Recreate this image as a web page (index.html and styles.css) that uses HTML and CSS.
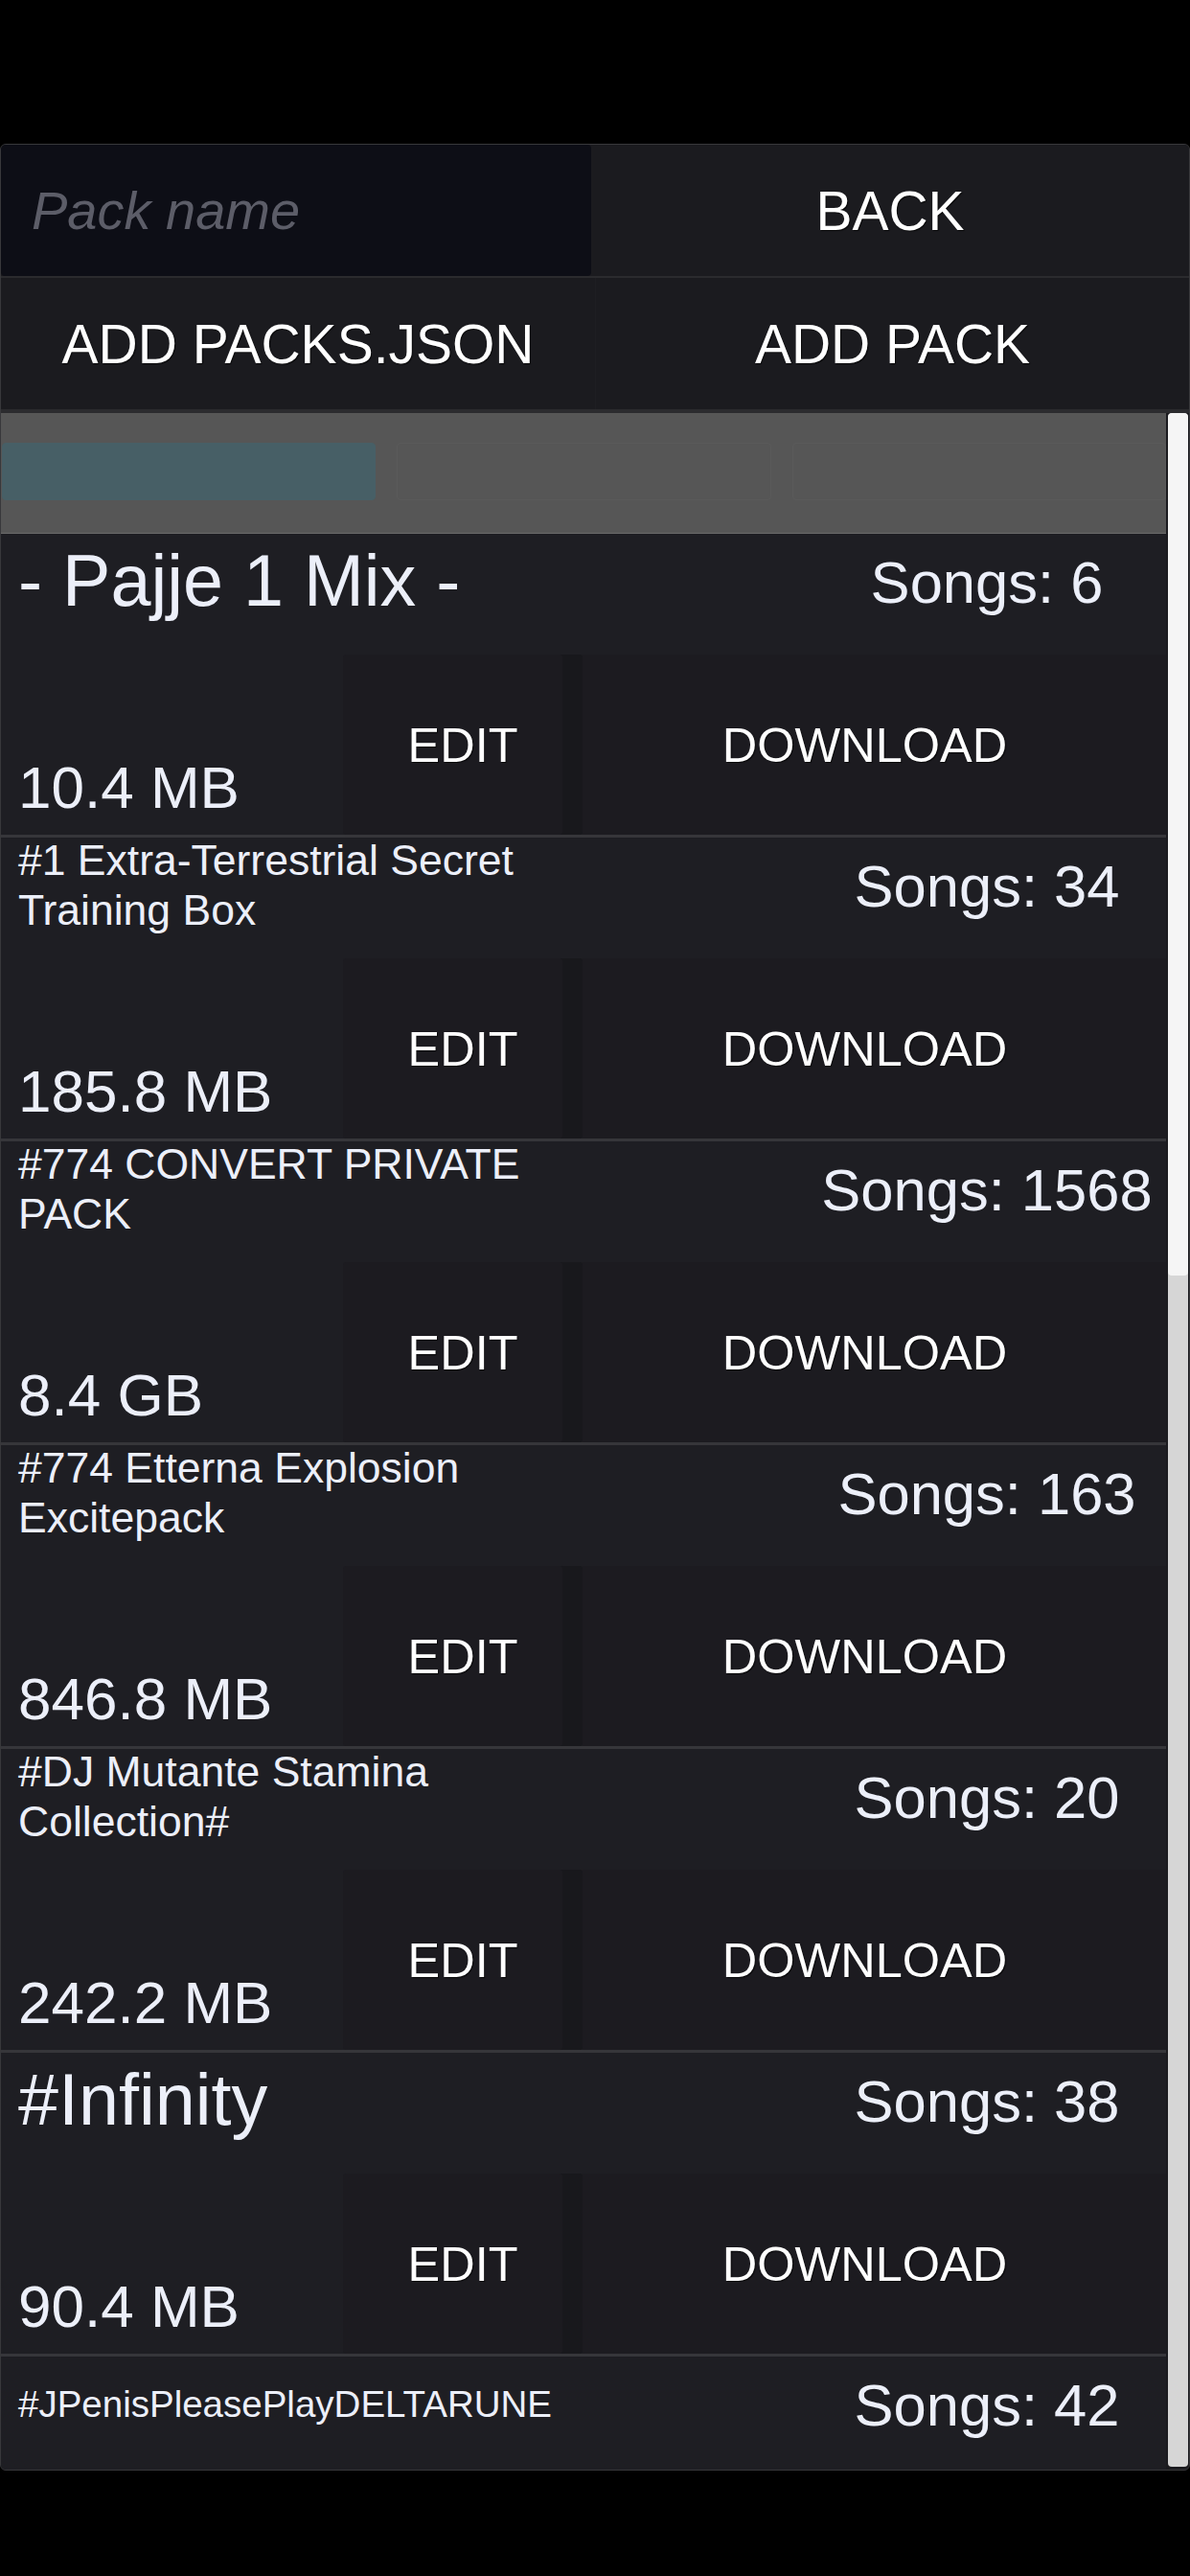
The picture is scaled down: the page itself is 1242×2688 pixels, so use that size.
FILE: index.html
```html
<!DOCTYPE html>
<html lang="en">
<head>
    <meta charset="UTF-8">
    <meta name="viewport" content="width=device-width, initial-scale=1.0">
    <title>Packs</title>
    <link rel="stylesheet" href="styles.css">
</head>
<body>

    <div class="panel">
        <div class="top-row">
            <input class="pack-input" type="text" placeholder="Pack name">
            <button class="btn">BACK</button>
        </div>
        <div class="top-row second">
            <button class="btn">ADD PACKS.JSON</button>
            <button class="btn">ADD PACK</button>
        </div>

        <div class="list-wrap">
            <div class="list">
                <!-- Tabs -->
                <div class="tabs">
                    <div class="tab active"></div>
                    <div class="tab"></div>
                    <div class="tab"></div>
                </div>

                <div class="pack">
                    <div class="pack-head">
                        <div class="pack-name big">- Pajje 1 Mix -</div>
                        <div class="songs">Songs: 6</div>
                    </div>
                    <div class="pack-actions">
                        <div class="size">10.4 MB</div>
                        <button class="act edit">EDIT</button>
                        <button class="act download">DOWNLOAD</button>
                    </div>
                </div>

                <div class="pack">
                    <div class="pack-head">
                        <div class="pack-name">#1 Extra-Terrestrial Secret Training Box</div>
                        <div class="songs">Songs: 34</div>
                    </div>
                    <div class="pack-actions">
                        <div class="size">185.8 MB</div>
                        <button class="act edit">EDIT</button>
                        <button class="act download">DOWNLOAD</button>
                    </div>
                </div>

                <div class="pack">
                    <div class="pack-head">
                        <div class="pack-name">#774 CONVERT PRIVATE PACK</div>
                        <div class="songs">Songs: 1568</div>
                    </div>
                    <div class="pack-actions">
                        <div class="size">8.4 GB</div>
                        <button class="act edit">EDIT</button>
                        <button class="act download">DOWNLOAD</button>
                    </div>
                </div>

                <div class="pack">
                    <div class="pack-head">
                        <div class="pack-name">#774 Etterna Explosion Excitepack</div>
                        <div class="songs">Songs: 163</div>
                    </div>
                    <div class="pack-actions">
                        <div class="size">846.8 MB</div>
                        <button class="act edit">EDIT</button>
                        <button class="act download">DOWNLOAD</button>
                    </div>
                </div>

                <div class="pack">
                    <div class="pack-head">
                        <div class="pack-name">#DJ Mutante Stamina Collection#</div>
                        <div class="songs">Songs: 20</div>
                    </div>
                    <div class="pack-actions">
                        <div class="size">242.2 MB</div>
                        <button class="act edit">EDIT</button>
                        <button class="act download">DOWNLOAD</button>
                    </div>
                </div>

                <div class="pack">
                    <div class="pack-head">
                        <div class="pack-name big">#Infinity</div>
                        <div class="songs">Songs: 38</div>
                    </div>
                    <div class="pack-actions">
                        <div class="size">90.4 MB</div>
                        <button class="act edit">EDIT</button>
                        <button class="act download">DOWNLOAD</button>
                    </div>
                </div>

                <div class="pack">
                    <div class="pack-head">
                        <div class="pack-name small">#JPenisPleasePlayDELTARUNE</div>
                        <div class="songs">Songs: 42</div>
                    </div>
                </div>
            </div>

            <div class="scrollbar">
                <div class="thumb"></div>
            </div>
        </div>
    </div>

</body>
</html>
```

FILE: styles.css
```css
* {
    box-sizing: border-box;
}

body {
    margin: 0;
    padding-top: 150px;
    background-color: #000;
    font-family: "Liberation Sans", Arial, sans-serif;
    height: 2688px;
    overflow: hidden;
}

.panel {
    height: 2428px;
    background-color: #1b1b1f;
    border: 1px solid #38383b;
    border-radius: 6px;
    overflow: hidden;
    display: flex;
    flex-direction: column;
}

.top-row {
    display: grid;
    grid-template-columns: 616px 1fr;
    height: 137px;
}

.top-row.second {
    grid-template-columns: 621px 1fr;
    border-top: 2px solid #2b2b2e;
    border-bottom: 4px solid #2b2b2e;
    height: 143px;
}

.pack-input {
    background-color: #0d0e16;
    border: none;
    border-radius: 4px;
    padding: 0 0 0 32px;
    font-family: inherit;
    font-size: 56px;
    font-style: italic;
    color: #fff;
    outline: none;
}

.pack-input::placeholder {
    color: #5c5d68;
}

.btn {
    background-color: #1b1b1f;
    border: none;
    color: #fff;
    font-family: inherit;
    font-size: 57px;
    text-shadow: 1px 1px 1px rgba(0, 0, 0, 0.7);
    padding: 0;
}

.second .btn:first-child {
    border-right: 1px solid #1e1e22;
}

.list-wrap {
    flex: 1;
    display: flex;
    gap: 2px;
    min-height: 0;
}

.list {
    flex: 1;
    overflow: hidden;
    background-color: #1e1e23;
}

.tabs {
    height: 126px;
    background-color: #565656;
    border-bottom: 1px solid #6a6a6a;
    display: flex;
    gap: 22px;
    padding: 31px 0 0 1px;
}

.tab {
    width: 391px;
    height: 60px;
    border: 1px solid #5a5a5a;
    border-radius: 4px;
}

.tab.active {
    background-color: #475f66;
    border-color: #475f66;
}

.pack {
    border-bottom: 3px solid #36363a;
}

.pack-head {
    height: 126px;
    display: flex;
    align-items: center;
    justify-content: space-between;
    padding: 0 0 26px 18px;
    color: #eceff9;
}

.pack-name {
    width: 620px;
    font-size: 44.5px;
    line-height: 1.16;
}

.pack-name.big {
    font-size: 75.5px;
}

.pack-name.small {
    font-size: 38.5px;
}

.songs {
    width: 374px;
    text-align: center;
    font-size: 61.5px;
    white-space: nowrap;
}

.pack-actions {
    height: 188px;
    display: grid;
    grid-template-columns: 357px 250px 1fr;
}

.size {
    align-self: end;
    padding: 0 0 14px 18px;
    font-size: 62px;
    color: #eceff9;
}

.act {
    border: none;
    padding: 0;
    font-family: inherit;
    font-size: 50.5px;
    color: #fff;
    text-shadow: 1px 1px 1px rgba(0, 0, 0, 0.7);
    background-color: #1c1b20;
}

.act.edit {
    box-shadow: inset -21px 0 0 #18181c;
    border-radius: 3px;
}

.act.download {
    padding-right: 20px;
}

.scrollbar {
    width: 21px;
    margin: 0 1px 3px 0;
    background-color: #d6d6d6;
    border-radius: 4px;
    overflow: hidden;
}

.thumb {
    height: 900px;
    background-color: #f5f5f5;
    border-radius: 4px;
}
```
